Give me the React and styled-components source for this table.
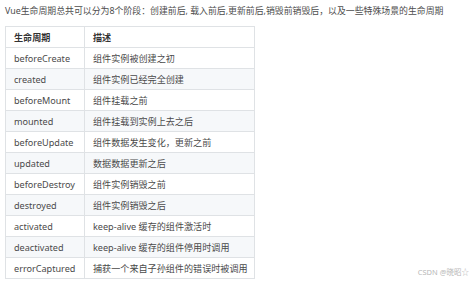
import React from 'react';
import styled, { createGlobalStyle } from 'styled-components';

const GlobalStyle = createGlobalStyle`
  html, body {
    margin: 0;
    padding: 0;
    background: #fff;
  }
  body {
    font-family: "Noto Sans", "Noto Sans CJK SC", sans-serif;
    color: #4d4d4d;
  }
`;

const Page = styled.div`
  position: relative;
  width: 474px;
  height: 286px;
  padding: 4px 5px 0;
  box-sizing: border-box;
  overflow: hidden;
`;

const Intro = styled.p`
  margin: 0;
  font-size: 8.9px;
  line-height: 13px;
  color: #4d4d4d;
  white-space: nowrap;
`;

const Table = styled.table`
  margin-top: 9px;
  border-collapse: collapse;
  table-layout: fixed;
  width: 250px;
  font-size: 9.1px;
  color: #4a4a4a;
`;

const Row = styled.tr`
  height: 21px;
  background: ${p => (p.$shaded ? '#f6f8fa' : '#fff')};
`;

const Head = styled.th`
  text-align: left;
  font-weight: 700;
  color: #333;
  border: 1px solid #dfe2e5;
  padding: 0 4px 0 8px;
  width: ${p => p.$w || 'auto'};
`;

const Cell = styled.td`
  border: 1px solid #dfe2e5;
  padding: 0 4px 0 8px;
  white-space: nowrap;
`;

const Watermark = styled.span`
  position: absolute;
  right: 5px;
  bottom: 9px;
  font-size: 7.5px;
  color: #b8b8b8;
`;

const hooks = [
  ['beforeCreate', '组件实例被创建之初'],
  ['created', '组件实例已经完全创建'],
  ['beforeMount', '组件挂载之前'],
  ['mounted', '组件挂载到实例上去之后'],
  ['beforeUpdate', '组件数据发生变化，更新之前'],
  ['updated', '数据数据更新之后'],
  ['beforeDestroy', '组件实例销毁之前'],
  ['destroyed', '组件实例销毁之后'],
  ['activated', 'keep-alive 缓存的组件激活时'],
  ['deactivated', 'keep-alive 缓存的组件停用时调用'],
  ['errorCaptured', '捕获一个来自子孙组件的错误时被调用'],
];

export default function App() {
  return (
    <Page>
      <GlobalStyle />
      <Intro>
        Vue生命周期总共可以分为8个阶段：创建前后, 载入前后,更新前后,销毁前销毁后，以及一些特殊场景的生命周期
      </Intro>
      <Table>
        <thead>
          <Row>
            <Head $w="66px">生命周期</Head>
            <Head>描述</Head>
          </Row>
        </thead>
        <tbody>
          {hooks.map(([name, desc], i) => (
            <Row key={name} $shaded={i % 2 === 1}>
              <Cell>{name}</Cell>
              <Cell>{desc}</Cell>
            </Row>
          ))}
        </tbody>
      </Table>
      <Watermark>CSDN @晓昭☆</Watermark>
    </Page>
  );
}
